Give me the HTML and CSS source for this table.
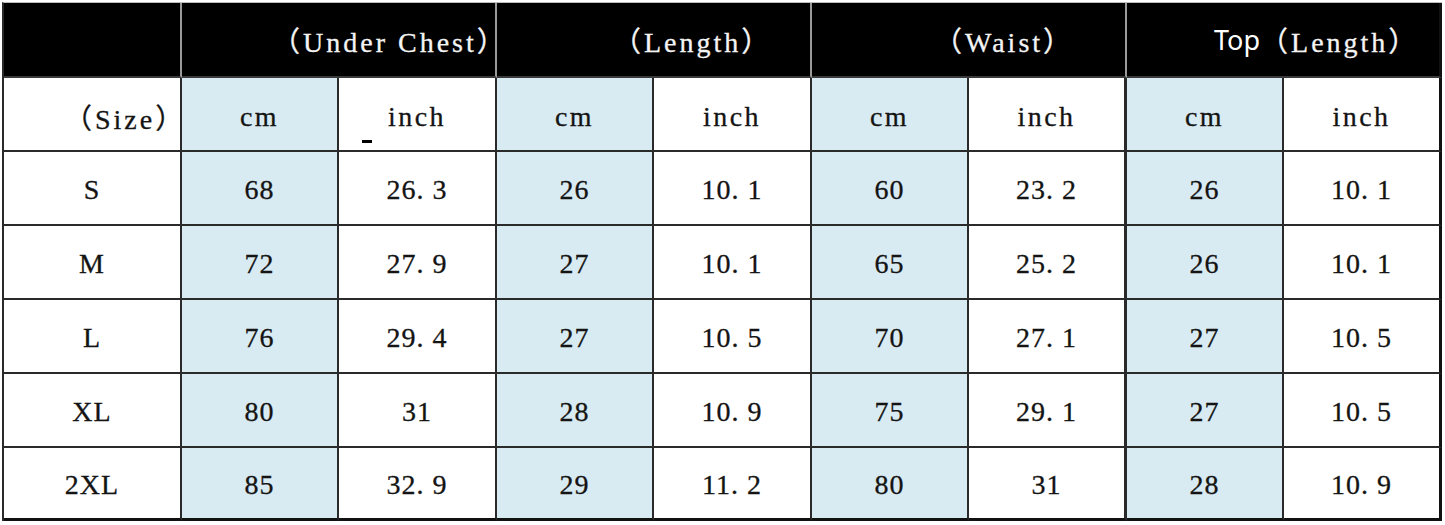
FILE: index.html
```html
<!DOCTYPE html>
<html lang="en">
<head>
<meta charset="utf-8">
<title>Size Chart</title>
<link rel="stylesheet" href="styles.css">
</head>
<body>
<div class="page">
  <div class="chart">
    <div class="cell head"></div>
    <div class="cell head group g-uc">（Under Chest）</div>
    <div class="cell head group g-len">（Length）</div>
    <div class="cell head group g-waist">（Waist）</div>
    <div class="cell head group g-top last"><span class="sans">Top</span> （Length）</div>

    <div class="cell label size-label">（Size）</div>
    <div class="cell label cm">cm</div>
    <div class="cell label inch mark-host">inch<span class="mark"></span></div>
    <div class="cell label cm">cm</div>
    <div class="cell label inch">inch</div>
    <div class="cell label cm">cm</div>
    <div class="cell label inch thick">inch</div>
    <div class="cell label cm">cm</div>
    <div class="cell label inch last">inch</div>

    <div class="cell size">S</div>
    <div class="cell cm">68</div>
    <div class="cell inch">26. 3</div>
    <div class="cell cm">26</div>
    <div class="cell inch">10. 1</div>
    <div class="cell cm">60</div>
    <div class="cell inch thick">23. 2</div>
    <div class="cell cm">26</div>
    <div class="cell inch last">10. 1</div>

    <div class="cell size">M</div>
    <div class="cell cm">72</div>
    <div class="cell inch">27. 9</div>
    <div class="cell cm">27</div>
    <div class="cell inch">10. 1</div>
    <div class="cell cm">65</div>
    <div class="cell inch thick">25. 2</div>
    <div class="cell cm">26</div>
    <div class="cell inch last">10. 1</div>

    <div class="cell size">L</div>
    <div class="cell cm">76</div>
    <div class="cell inch">29. 4</div>
    <div class="cell cm">27</div>
    <div class="cell inch">10. 5</div>
    <div class="cell cm">70</div>
    <div class="cell inch thick">27. 1</div>
    <div class="cell cm">27</div>
    <div class="cell inch last">10. 5</div>

    <div class="cell size">XL</div>
    <div class="cell cm">80</div>
    <div class="cell inch">31</div>
    <div class="cell cm">28</div>
    <div class="cell inch">10. 9</div>
    <div class="cell cm">75</div>
    <div class="cell inch thick">29. 1</div>
    <div class="cell cm">27</div>
    <div class="cell inch last">10. 5</div>

    <div class="cell size bottom">2XL</div>
    <div class="cell cm bottom">85</div>
    <div class="cell inch bottom">32. 9</div>
    <div class="cell cm bottom">29</div>
    <div class="cell inch bottom">11. 2</div>
    <div class="cell cm bottom">80</div>
    <div class="cell inch thick bottom">31</div>
    <div class="cell cm bottom">28</div>
    <div class="cell inch last bottom">10. 9</div>
  </div>
</div>
</body>
</html>
```

FILE: styles.css
```css
html, body {
  margin: 0;
  padding: 0;
  background: #ffffff;
}

.page {
  padding: 2px 0 0 2px;
}

.chart {
  display: grid;
  grid-template-columns: 178px 157px 158px 157px 158px 157px 158px 157px 158px;
  grid-template-rows: 75px repeat(5, 74px) 73px;
  width: 1440px;
  box-sizing: border-box;
  border-left: 2px solid #2a2a2a;
  border-top: 1px solid #bdbdbd;
  font-family: "Liberation Serif", "Noto Sans CJK SC", serif;
  font-size: 28px;
  letter-spacing: 1px;
  color: #141414;
  -webkit-text-stroke: 0.3px #141414;
}

.cell {
  box-sizing: border-box;
  display: flex;
  align-items: center;
  justify-content: center;
  border-right: 2px solid #2a2a2a;
  border-bottom: 2px solid #2a2a2a;
  background: #ffffff;
  white-space: nowrap;
  padding-top: 3px;
}

.label {
  padding-top: 6px;
  letter-spacing: 2.5px;
}

.head {
  background: #000000;
  color: #f4f4f4;
  -webkit-text-stroke: 0.3px #f4f4f4;
  border-right: 2px solid #9a9a9a;
  border-bottom: 2px solid #3a3a3a;
  padding-top: 0;
  letter-spacing: 3px;
}

.group {
  grid-column: span 2;
  justify-content: flex-start;
}

.g-uc { padding-left: 90px; }
.g-len { padding-left: 116px; }
.g-waist { padding-left: 122px; }
.g-top { padding-left: 87px; }

.head.last {
  border-right: 3px solid #111111;
}

.sans {
  font-family: "Noto Sans", "Open Sans", sans-serif;
  font-size: 27px;
  letter-spacing: 0;
  color: #ffffff;
  -webkit-text-stroke: 0;
}

.size-label {
  justify-content: flex-start;
  padding-left: 60px;
  letter-spacing: 3px;
}

.cm {
  background: #d9ebf2;
}

.thick {
  border-right-width: 3px;
}

.last {
  border-right: 3px solid #111111;
}

.bottom {
  border-bottom: 3px solid #111111;
}

.mark-host {
  position: relative;
}

.mark {
  position: absolute;
  left: 23px;
  top: 62px;
  width: 10px;
  height: 3px;
  background: #000000;
}
```
